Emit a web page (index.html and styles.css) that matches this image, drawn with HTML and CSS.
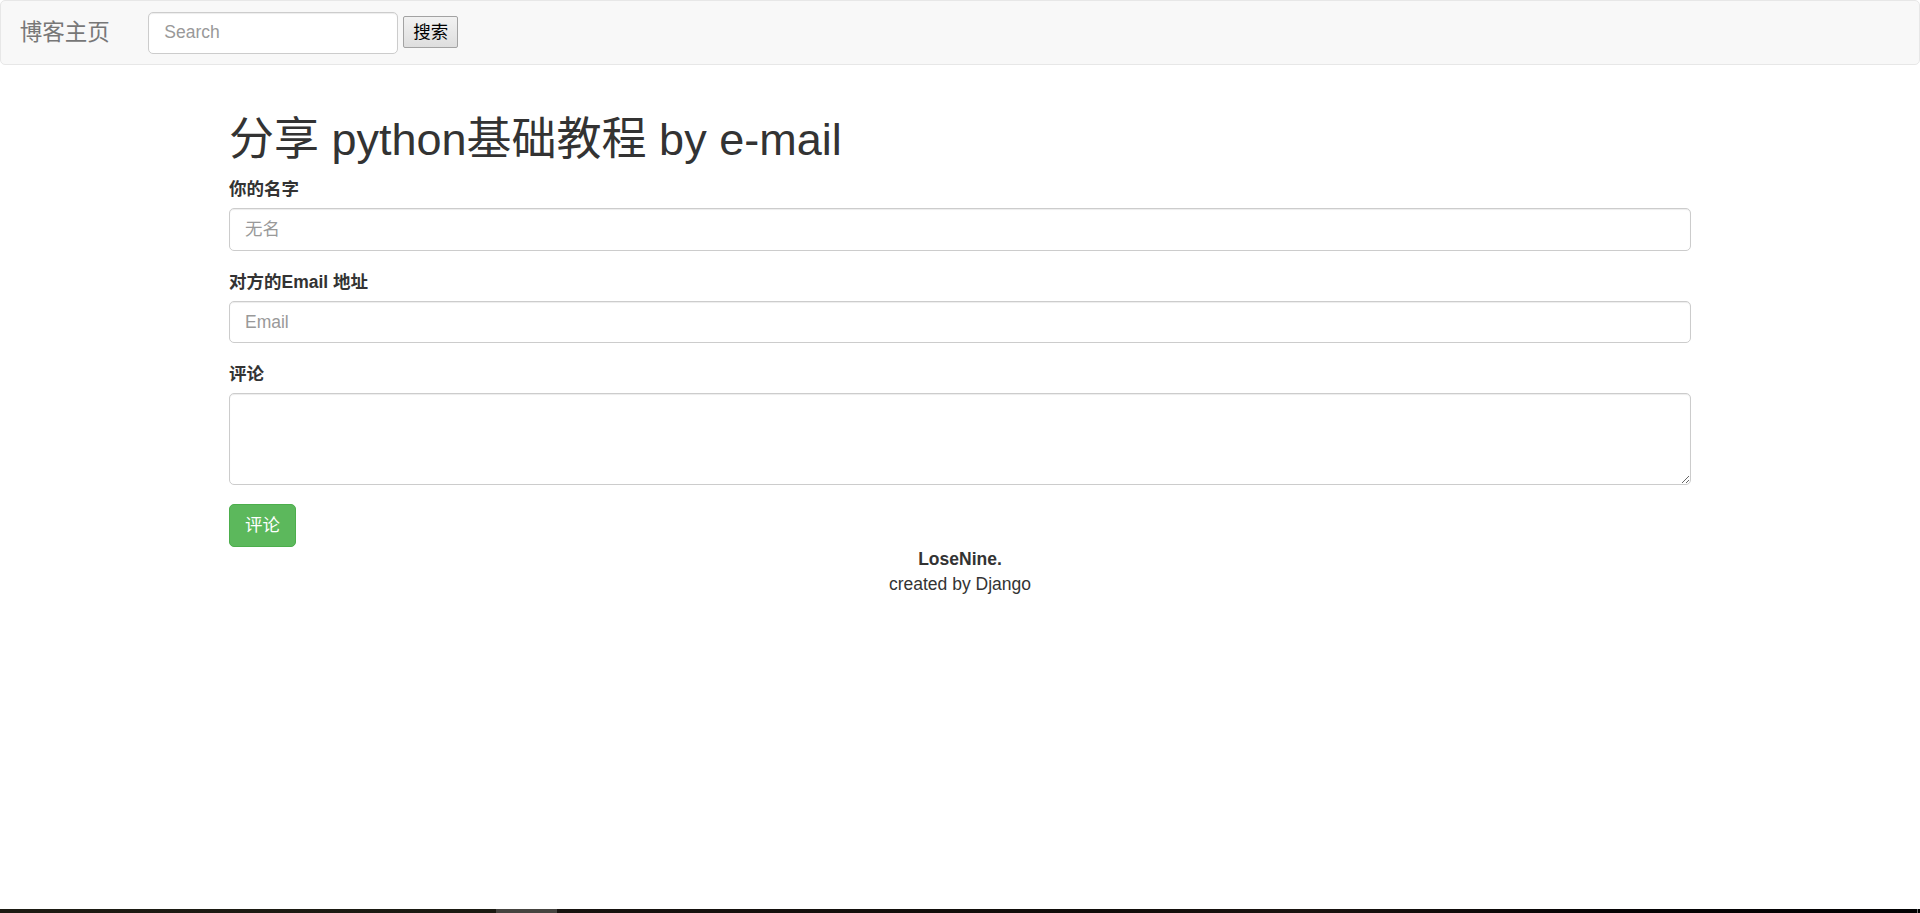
FILE: index.html
```html
<!DOCTYPE html>
<html lang="zh-CN">
<head>
<meta charset="utf-8">
<title>分享 python基础教程 by e-mail</title>
<link rel="stylesheet" href="styles.css">
</head>
<body>
<div class="page">
  <nav class="navbar">
    <a class="brand" href="#">博客主页</a>
    <form class="nav-form">
      <input class="nav-search" type="text" placeholder="Search">
      <button class="nav-btn" type="button">搜索</button>
    </form>
  </nav>
  <main class="container">
    <h1 class="title">分享 python基础教程 by e-mail</h1>
    <form class="share-form">
      <div class="form-group">
        <label class="form-label">你的名字</label>
        <input class="form-control" type="text" placeholder="无名">
      </div>
      <div class="form-group">
        <label class="form-label">对方的Email 地址</label>
        <input class="form-control" type="text" placeholder="Email">
      </div>
      <div class="form-group">
        <label class="form-label">评论</label>
        <textarea class="form-control textarea" rows="3"></textarea>
      </div>
      <button class="btn-success" type="button">评论</button>
    </form>
    <footer class="footer">
      <strong>LoseNine.</strong><br>
      created by Django
    </footer>
  </main>
  <div class="taskbar"></div>
</div>
</body>
</html>
```
FILE: styles.css
```css
* { box-sizing: border-box; }
html, body { margin: 0; padding: 0; }
body {
  font-family: "Liberation Sans", "Noto Sans CJK SC", sans-serif;
  font-size: 17.5px;
  line-height: 25px;
  color: #333;
  background: #fff;
}
.page {
  min-height: 913px;
  display: flex;
  flex-direction: column;
}
.navbar {
  display: flex;
  align-items: flex-start;
  height: 65px;
  background: #f8f8f8;
  border: 1px solid #e7e7e7;
  border-radius: 5px;
}
.brand {
  display: block;
  padding: 18.75px 18.75px 0 18.75px;
  height: 62px;
  font-size: 22.5px;
  line-height: 25px;
  color: #777;
  text-decoration: none;
}
.nav-form {
  display: flex;
  align-items: flex-start;
  margin: 10.5px 0 0 1px;
  padding: 0 18.75px;
}
.nav-search {
  width: 250px;
  height: 42px;
  padding: 7.5px 15px;
  font-family: inherit;
  font-size: 17.5px;
  color: #555;
  background: #fff;
  border: 1px solid #ccc;
  border-radius: 5px;
  box-shadow: inset 0 1px 1px rgba(0,0,0,.075);
  outline: none;
}
.nav-search::placeholder, .form-control::placeholder { color: #999; }
.nav-btn {
  margin: 4px 0 0 5px;
  height: 32px;
  padding: 1px 9px 0 9px;
  font-family: inherit;
  font-size: 17.5px;
  line-height: 25px;
  color: #000;
  background: linear-gradient(#f2f2f2, #dedede);
  border: 1px solid #a3a3a3;
  border-radius: 2px;
}
.container {
  width: 1462px;
  margin: 0 auto;
  padding-top: 50px;
}
.title {
  margin: 0 0 12.5px 0;
  font-size: 45px;
  line-height: 49.5px;
  font-weight: 400;
  color: #333;
}
.form-group { margin-bottom: 18.75px; }
.form-label {
  display: block;
  margin-bottom: 6.25px;
  font-weight: bold;
  line-height: 25px;
}
.form-control {
  display: block;
  width: 100%;
  height: 42.5px;
  padding: 7.5px 15px;
  font-family: inherit;
  font-size: 17.5px;
  line-height: 25px;
  color: #555;
  background: #fff;
  border: 1px solid #ccc;
  border-radius: 5px;
  box-shadow: inset 0 1px 1px rgba(0,0,0,.075);
  outline: none;
}
.textarea { height: 92px; resize: vertical; }
.btn-success {
  display: block;
  height: 42.5px;
  padding: 7.5px 15px;
  font-family: inherit;
  font-size: 17.5px;
  line-height: 25px;
  color: #fff;
  background: #5cb85c;
  border: 1px solid #4cae4c;
  border-radius: 5px;
}
.footer {
  text-align: center;
  line-height: 25px;
}
.taskbar {
  margin-top: auto;
  height: 4px;
  background: linear-gradient(90deg, #1d1b13 0, #1b1a12 496px, #464440 496px, #464440 557px, #17130f 557px, #100c09 1100px, #1a1410 1300px, #060304 1600px, #030203 1917px, #777 1917px, #777 1918px, #000 1918px);
}
```
